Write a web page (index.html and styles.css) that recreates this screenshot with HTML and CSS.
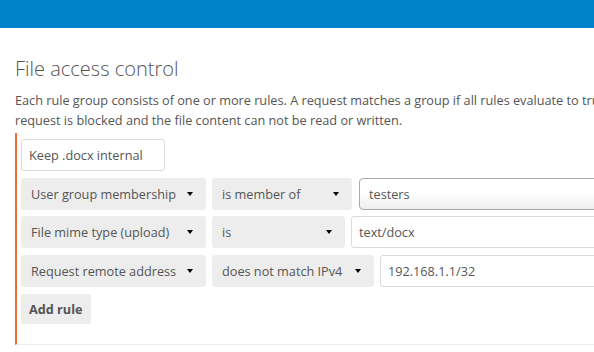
FILE: index.html
```html
<!DOCTYPE html>
<html>
<head>
  <meta charset="UTF-8">
  <title>File access control</title>
  <link rel="stylesheet" href="styles.css">
</head>
<body>
  <div class="topbar"></div>

  <div class="section">
    <h2>File access control</h2>
    <p class="hint">Each rule group consists of one or more rules. A request matches a group if all rules evaluate to true. If a request matches at least one group, the request is blocked and the file content can not be read or written.</p>

    <div class="rule-group">
      <input type="text" class="group-name" value="Keep .docx internal">

      <div class="rule">
        <div class="dropdown check">User group membership</div>
        <div class="dropdown operator op-member">is member of</div>
        <input type="text" class="value value-select" value="testers">
      </div>

      <div class="rule">
        <div class="dropdown check">File mime type (upload)</div>
        <div class="dropdown operator op-is">is</div>
        <input type="text" class="value" value="text/docx">
      </div>

      <div class="rule">
        <div class="dropdown check">Request remote address</div>
        <div class="dropdown operator op-ip">does not match IPv4</div>
        <input type="text" class="value" value="192.168.1.1/32">
      </div>

      <div class="actions">
        <button class="add-rule">Add rule</button>
      </div>
    </div>
  </div>
</body>
</html>
```

FILE: styles.css
```css
:root {
  --primary-color: #0082c9;
  --text-color: #555555;
  --button-bg: #ededed;
  --border-color: #dbdbdb;
  --group-color: #ec6b39;
}

* {
  box-sizing: border-box;
  margin: 0;
  padding: 0;
}

body {
  font-family: 'Open Sans', 'Liberation Sans', sans-serif;
  font-size: 12.7px;
  color: var(--text-color);
  background-color: #ffffff;
  overflow: hidden;
}

.topbar {
  height: 28px;
  background-color: var(--primary-color);
}

.section {
  width: 900px;
  padding: 27px 0 0 15px;
}

h2 {
  font-size: 20px;
  font-weight: 300;
  line-height: 27px;
  margin-bottom: 8px;
}

.hint {
  line-height: 20px;
  margin-bottom: 3px;
}

.rule-group {
  display: flex;
  flex-direction: column;
  gap: 6.5px;
  border-left: 2px solid var(--group-color);
  border-bottom: 1px solid #ededed;
  padding: 6px 0 20px 4px;
}

input {
  font-family: inherit;
  font-size: 12.7px;
  color: var(--text-color);
  height: 32px;
  border: 1px solid var(--border-color);
  border-radius: 3px;
  background-color: #ffffff;
  padding: 0 7px;
  outline: none;
}

.group-name {
  width: 144px;
}

.rule {
  display: flex;
  gap: 6px;
  height: 32px;
}

.dropdown {
  position: relative;
  display: flex;
  align-items: center;
  height: 32px;
  padding: 0 26px 0 10px;
  border-radius: 3px;
  background-color: var(--button-bg);
  white-space: nowrap;
}

.dropdown::after {
  content: "";
  position: absolute;
  right: 13px;
  top: 14px;
  border-left: 3.5px solid transparent;
  border-right: 3.5px solid transparent;
  border-top: 4px solid #000000;
}

.check {
  width: 185px;
}

.op-member {
  width: 140px;
  margin-right: 1px;
}

.op-is {
  width: 133px;
}

.op-ip {
  width: 162px;
}

.value {
  width: 260px;
}

.value-select {
  border: 1px solid #aaaaaa;
  border-radius: 4px;
  padding-left: 9px;
  background: linear-gradient(to bottom, #ffffff 45%, #eeeeee 100%);
}

.actions {
  display: flex;
}

.add-rule {
  font-family: inherit;
  font-size: 12.7px;
  font-weight: 700;
  color: var(--text-color);
  background-color: var(--button-bg);
  border: none;
  border-radius: 3px;
  height: 30px;
  padding: 0 8px;
  margin-top: 0.5px;
}
```
